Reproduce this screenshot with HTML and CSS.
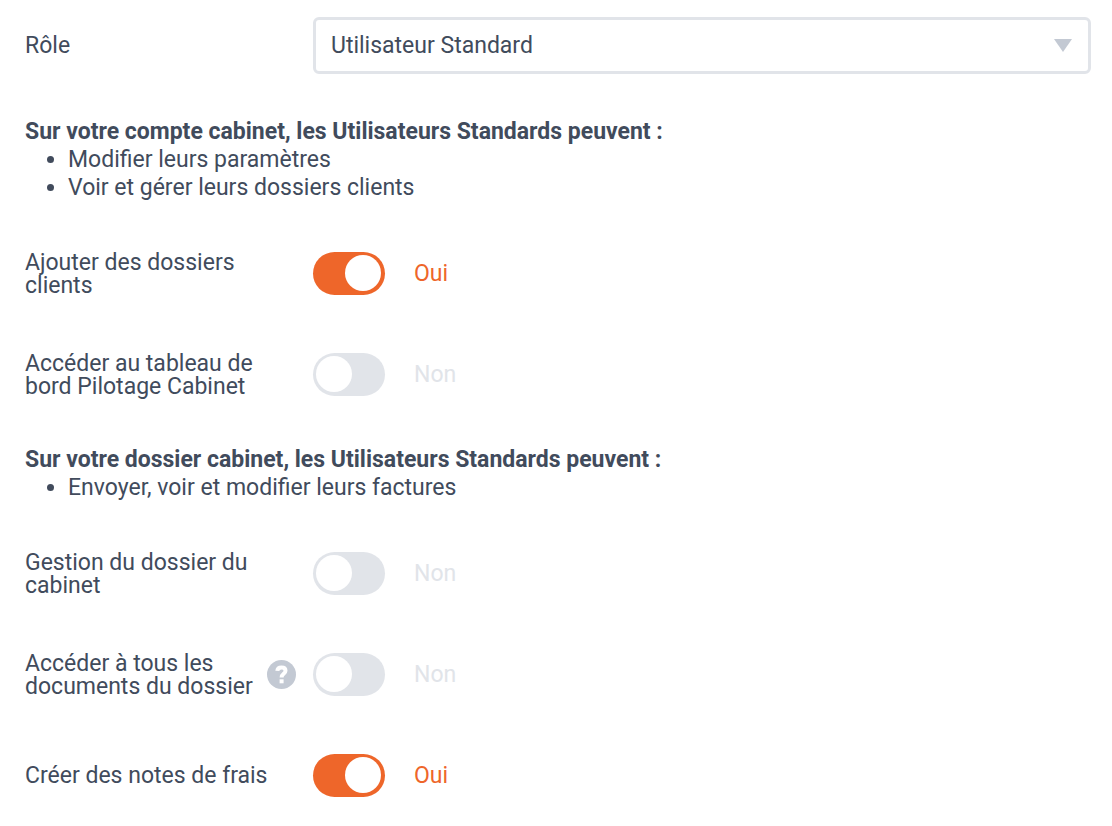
FILE: index.html
```html
<!DOCTYPE html>
<html lang="fr">
<head>
    <meta charset="utf-8">
    <meta name="viewport" content="width=device-width, initial-scale=1">
    <title>Rôle de l'utilisateur</title>
    <link rel="stylesheet" href="styles.css">
</head>
<body>
    <form class="role-form">
        <div class="row role-row">
            <label class="label" for="role">Rôle</label>
            <div class="select">
                <select id="role">
                    <option>Utilisateur Standard</option>
                </select>
                <svg class="arrow" viewBox="0 0 18 13" aria-hidden="true"><path d="M0 0h18L9 13z"/></svg>
            </div>
        </div>

        <section class="rights">
            <h2>Sur votre compte cabinet, les Utilisateurs Standards peuvent :</h2>
            <ul>
                <li>Modifier leurs paramètres</li>
                <li>Voir et gérer leurs dossiers clients</li>
            </ul>
        </section>
        <div class="row">
            <label class="label" for="add-clients">Ajouter des dossiers clients</label>
            <input class="switch" id="add-clients" type="checkbox" checked>
            <span class="state">Oui</span>
        </div>
        <div class="row">
            <label class="label" for="dashboard">Accéder au tableau de bord Pilotage Cabinet</label>
            <input class="switch" id="dashboard" type="checkbox">
            <span class="state">Non</span>
        </div>

        <section class="rights">
            <h2>Sur votre dossier cabinet, les Utilisateurs Standards peuvent :</h2>
            <ul>
                <li>Envoyer, voir et modifier leurs factures</li>
            </ul>
        </section>
        <div class="row">
            <label class="label" for="manage">Gestion du dossier du cabinet</label>
            <input class="switch" id="manage" type="checkbox">
            <span class="state">Non</span>
        </div>
        <div class="row">
            <div class="label with-help">
                <label for="documents">Accéder à tous les documents du dossier</label>
                <button class="help" type="button" aria-label="Aide">
                    <svg viewBox="0 0 29 29" aria-hidden="true">
                        <path d="M10.3 10.8C10.5 8.5 12 7.4 14.5 7.4c2.5 0 4 1.3 4 3.4 0 3.1-3.9 3-3.9 6.6"/>
                        <path d="M14.6 19.3v4"/>
                    </svg>
                </button>
            </div>
            <input class="switch" id="documents" type="checkbox">
            <span class="state">Non</span>
        </div>
        <div class="row">
            <label class="label" for="expenses">Créer des notes de frais</label>
            <input class="switch" id="expenses" type="checkbox" checked>
            <span class="state">Oui</span>
        </div>
    </form>
    <script>
        document.querySelectorAll('.switch').forEach(function(input) {
            input.addEventListener('change', function() {
                input.nextElementSibling.textContent = input.checked ? 'Oui' : 'Non';
            });
        });
    </script>
</body>
</html>
```

FILE: styles.css
```css
* {
    box-sizing: border-box;
}
body {
    margin: 0;
    font-family: Roboto, sans-serif;
    font-size: 23px;
    line-height: 28px;
    color: #414b5c;
    background-color: #fff;
}
.role-form {
    padding: 17px 21px 24px 25px;
}
.row {
    display: grid;
    grid-template-columns: 288px 72px 1fr;
    align-items: center;
    min-height: 47px;
}
.row + .row {
    margin-top: 54px;
}
.row .label {
    padding-right: 17px;
    line-height: 23px;
}
.role-row {
    grid-template-columns: 288px 1fr;
}
.select {
    display: grid;
    align-items: center;
}
.select select,
.select .arrow {
    grid-area: 1 / 1;
}
.select select {
    width: 100%;
    height: 57px;
    padding: 0 48px 0 15px;
    border: 3px solid #e1e4e9;
    border-radius: 6px;
    font: inherit;
    color: inherit;
    background-color: #fff;
    appearance: none;
}
.select .arrow {
    justify-self: end;
    width: 18px;
    height: 13px;
    margin-right: 19px;
    fill: #c3c9d3;
    pointer-events: none;
}
.rights {
    margin: 48px 0;
}
.role-row + .rights {
    margin-top: 44px;
}
.rights h2 {
    margin: 0;
    font-size: 23px;
    font-weight: 700;
}
.rights ul {
    margin: 0;
    padding-left: 43px;
}
.switch {
    width: 72px;
    height: 43px;
    margin: 0;
    padding: 3px 4px 4px 3px;
    border-radius: 22px;
    background-color: #e1e4e9;
    appearance: none;
    cursor: pointer;
}
.switch::before {
    content: "";
    display: block;
    width: 36px;
    height: 36px;
    border-radius: 50%;
    background-color: #fff;
}
.switch:checked {
    background-color: #ee662a;
}
.switch:checked::before {
    margin-left: auto;
}
.state {
    padding-left: 29px;
    color: #e1e4e9;
}
.switch:checked + .state {
    color: #ee662a;
}
.with-help {
    display: flex;
    align-items: center;
    gap: 9px;
}
.help {
    flex: none;
    width: 29px;
    height: 29px;
    padding: 0;
    border: none;
    border-radius: 50%;
    background-color: #c3c9d3;
    cursor: pointer;
}
.help svg {
    display: block;
    fill: none;
    stroke: #fff;
    stroke-width: 4;
}
```
